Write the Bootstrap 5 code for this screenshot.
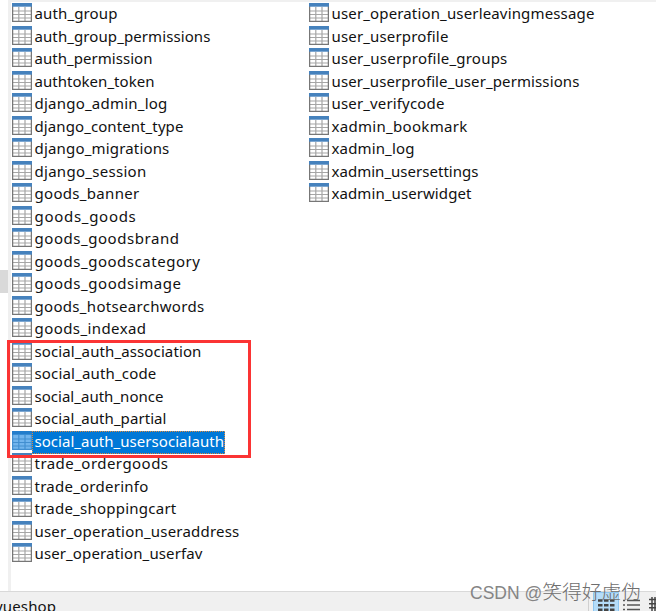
<!DOCTYPE html>
<html lang="en">

<head>
  <meta charset="UTF-8" />
  <meta name="viewport" content="width=device-width, initial-scale=1.0" />
  <title>Tables</title>
  <link href="https://cdn.jsdelivr.net/npm/bootstrap@5.3.0/dist/css/bootstrap.min.css" rel="stylesheet" />
  <style>
    body {
      height: 611px;
      font-family: "Noto Sans", "Noto Sans CJK SC", sans-serif;
      font-size: 15px;
      color: #111;
      background: #fff;
    }

    /* Object list pane */
    .side-strip {
      width: 8px;
      padding-top: 270px;
    }

    .side-thumb {
      height: 23px;
      background: #d9d9d9;
    }

    .pane {
      border-left: 3px solid #f0f0f0;
      border-top: 2px solid #f0f0f0;
      padding-top: 1px;
      padding-left: 1px;
    }

    .table-col {
      width: 297px;
    }

    .table-item {
      height: 22.5px;
    }

    .table-item svg {
      width: 20px;
      height: 19px;
      flex: none;
    }

    .table-name {
      height: 23px;
      line-height: 21px;
      padding: 0 1px 0 2.5px;
      white-space: nowrap;
    }

    .table-item.selected .table-name {
      color: #fff;
      background: #0078d7;
      outline: 1px dotted #e08a3c;
      outline-offset: -1px;
    }

    /* Red frame round the social_auth tables */
    .frame {
      left: 7px;
      top: 340px;
      width: 244px;
      height: 118px;
      border: 3px solid #fb3434;
    }

    /* Status bar */
    .status {
      height: 20px;
      background: #f0f0f0;
      border-top: 1px solid #d9d9d9;
    }

    .db-name {
      margin-left: -5px;
      line-height: 28px;
      letter-spacing: .15px;
    }

    .view-btns {
      border-left: 1px solid #d0d0d0;
      width: 68px;
      height: 19px;
    }

    .watermark {
      left: 470px;
      top: 579px;
      font-family: "Liberation Sans", "Noto Sans CJK SC", sans-serif;
      font-weight: 300;
      font-size: 17.5px;
      line-height: 26px;
      color: #858585;
      white-space: nowrap;
    }

    .watermark-name {
      font-size: 19.8px;
      color: #6e6e6e;
    }
  </style>
</head>

<body class="d-flex flex-column overflow-hidden position-relative">
  <svg class="d-none">
    <symbol id="grid" viewBox="0 0 20 19">
      <path fill="#fff" d="M0 0h20v19H0z" />
      <path fill="none" stroke="#a6a6a6" stroke-width="1.200" d="M1 8h18M1 11.500h18M1 15h18M6.800 4v14M13 4v14" />
      <path fill="none" stroke="#777" stroke-width="1.300" d="M.6 3v15.400h18.800V3" />
      <path fill="#4682bd" d="M0 0h20v3.700H0z" />
    </symbol>
    <symbol id="grid-sel" viewBox="0 0 20 19">
      <path fill="#72b5ed" d="M0 0h20v19H0z" />
      <path fill="none" stroke="#428fd0" stroke-width="1.200" d="M1 8h18M1 11.500h18M1 15h18M6.800 4v14M13 4v14M.6 3v15.400h18.800V3" />
      <path fill="#237dcb" d="M0 0h20v3.700H0z" />
    </symbol>
  </svg>

  <main class="d-flex flex-grow-1 overflow-hidden">
    <div class="side-strip flex-shrink-0">
      <div class="side-thumb"></div>
    </div>
    <div class="pane d-flex flex-grow-1">
      <div class="table-col" id="colLeft"></div>
      <div class="table-col" id="colRight"></div>
    </div>
  </main>

  <footer class="status d-flex justify-content-between flex-shrink-0 overflow-hidden">
    <div class="db-name">yueshop</div>
    <div class="view-btns">
      <svg class="d-block" width="67" height="19">
        <path fill="#b5dcf8" stroke="#8ec6f0" d="M4.500 .5h25v20h-25z" />
        <path fill="none" stroke="#444" stroke-width="2.600" stroke-dasharray="4.500 1.500" d="M9 8.500h17M9 13.200h17M9 17.900h17" />
        <path fill="none" stroke="#555" stroke-width="1.500" d="M34 8.500h2M38 8.500h13M34 13h2M38 13h13M34 17.500h2M38 17.500h13" />
        <path fill="none" stroke="#444" stroke-width="1.500" d="M60 7.500h7M60 11.700h7M60 15.700h7M63 5v14M66 5v14" />
      </svg>
    </div>
  </footer>

  <div class="frame position-absolute"></div>
  <div class="watermark position-absolute">CSDN @<span class="watermark-name">笑得好虚伪</span></div>

  <script src="https://cdn.jsdelivr.net/npm/bootstrap@5.3.0/dist/js/bootstrap.bundle.min.js"></script>
  <script>
    // [table name, text width in px]
    const left = [
      ["auth_group", 83], ["auth_group_permissions", 176], ["auth_permission", 118],
      ["authtoken_token", 120], ["django_admin_log", 133], ["django_content_type", 149],
      ["django_migrations", 135], ["django_session", 112], ["goods_banner", 105],
      ["goods_goods", 102], ["goods_goodsbrand", 145], ["goods_goodscategory", 166],
      ["goods_goodsimage", 147], ["goods_hotsearchwords", 170], ["goods_indexad", 112],
      ["social_auth_association", 167], ["social_auth_code", 122], ["social_auth_nonce", 129],
      ["social_auth_partial", 132], ["social_auth_usersocialauth", 189.5],
      ["trade_ordergoods", 134], ["trade_orderinfo", 114], ["trade_shoppingcart", 142],
      ["user_operation_useraddress", 205], ["user_operation_userfav", 168]
    ];
    const right = [
      ["user_operation_userleavingmessage", 263], ["user_userprofile", 117],
      ["user_userprofile_groups", 176], ["user_userprofile_user_permissions", 248],
      ["user_verifycode", 113], ["xadmin_bookmark", 136], ["xadmin_log", 83],
      ["xadmin_usersettings", 147], ["xadmin_userwidget", 140]
    ];
    const selected = "social_auth_usersocialauth";

    function fill(id, items) {
      const col = document.getElementById(id);
      col.innerHTML = items.map(([name]) => {
        const on = name === selected;
        return `<div class="table-item d-flex align-items-start${on ? " selected" : ""}">
          <svg><use href="#${on ? "grid-sel" : "grid"}"/></svg>
          <span class="table-name">${name}</span>
        </div>`;
      }).join("");

      // Spread the letters so each name takes its listed width
      col.querySelectorAll(".table-name").forEach((el, i) => {
        const [name, width] = items[i];
        const natural = el.getBoundingClientRect().width - 3.5;
        el.style.letterSpacing = (width - natural) / name.length + "px";
      });
    }

    fill("colLeft", left);
    fill("colRight", right);
  </script>
</body>

</html>
